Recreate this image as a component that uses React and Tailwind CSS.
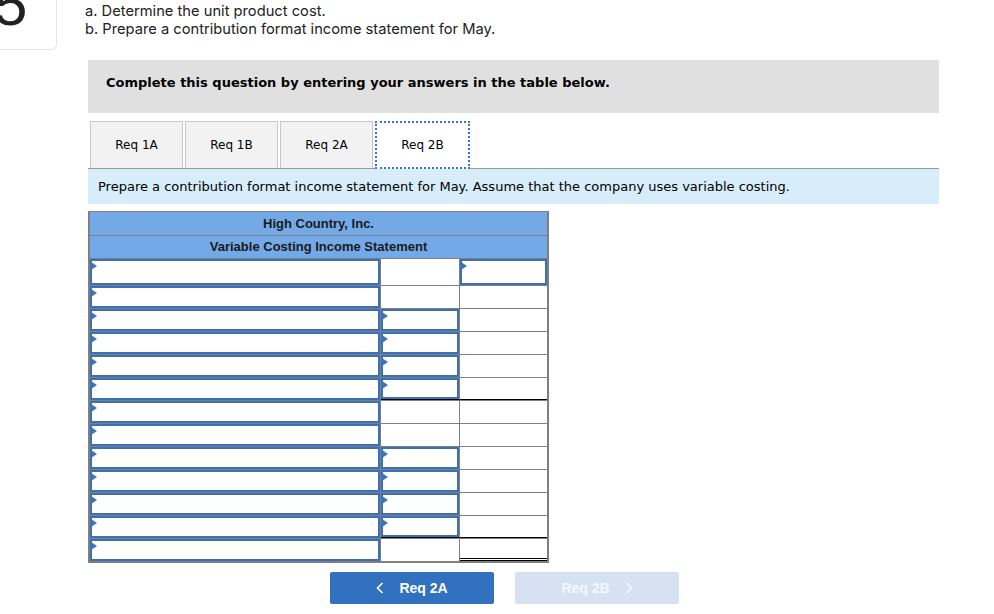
import React from "react";

const rows = [
  { c2: false, c3: true, h: "h-[27px]" },
  { c2: false },
  { c2: true },
  { c2: true },
  { c2: true },
  { c2: true, line: true },
  { c2: false },
  { c2: false },
  { c2: true },
  { c2: true },
  { c2: true },
  { c2: true, line: true },
  { c2: false, dbl: true },
];

function Field() {
  return (
    <div className="relative h-full border-2 border-[#3a70b7] bg-white">
      <span className="absolute left-[-1px] top-[1px] border-y-[4px] border-y-transparent border-l-[6px] border-l-[#3a74c0]" />
    </div>
  );
}

function Row({ row }) {
  return (
    <div className={`flex border-t border-[#808080] ${row.h || "h-[23px]"}`}>
      <div className="w-[291px] border-r border-[#808080]">
        <Field />
      </div>
      <div className={`w-[79px] border-r border-[#808080] ${row.line ? "border-b border-b-black" : ""}`}>
        {row.c2 && <Field />}
      </div>
      <div className={`flex-1 ${row.line ? "border-b border-b-black" : ""} ${row.dbl ? "border-b-[3px] border-double border-b-black" : ""}`}>
        {row.c3 && <Field />}
      </div>
    </div>
  );
}

export default function App() {
  const tabs = ["Req 1A", "Req 1B", "Req 2A"];
  return (
    <div className="w-[994px] h-[614px] overflow-hidden bg-white">
      <div className="flex">
        <div className="w-[57px] h-[50px] overflow-hidden border-r border-b border-[#e6e6e6] rounded-br-[6px] shrink-0">
          <div className="mt-[-25px] ml-[-6px] text-[60px] leading-none font-['Liberation_Sans',sans-serif] text-[#222]">5</div>
        </div>
        <div className="ml-[28px] pt-[2px] text-[14.7px] leading-[18px] text-[#222] font-['Inter',sans-serif]">
          <p>a. Determine the unit product cost.</p>
          <p>b. Prepare a contribution format income statement for May.</p>
        </div>
      </div>

      <div className="ml-[88px] w-[851px] mt-[10px]">
        <div className="h-[53px] bg-[#e0e0e0] pt-[13px] px-[18px] font-['DejaVu_Sans',sans-serif] text-[13px] font-bold text-black">
          Complete this question by entering your answers in the table below.
        </div>

        <div className="mt-[8px] flex items-end border-b border-[#9a9a9a] pl-[2px] gap-[2px] font-['DejaVu_Sans',sans-serif] text-[12px] text-black">
          {tabs.map(t => (
            <div key={t} className="w-[93px] h-[47px] flex items-center justify-center bg-[#f2f2f2] border border-b-0 border-[#c8c8c8]">
              {t}
            </div>
          ))}
          <div className="w-[95px] h-[48px] mb-[-1px] flex items-center justify-center bg-white border-2 border-dotted border-[#3a76c8]">
            Req 2B
          </div>
        </div>

        <div className="h-[35px] bg-[#d7edf9] flex items-center px-[10px] font-['DejaVu_Sans',sans-serif] text-[13px] text-black">
          Prepare a contribution format income statement for May. Assume that the company uses variable costing.
        </div>

        <div className="mt-[7px] w-[461px] border-2 border-t border-[#7f7f7f] font-['Liberation_Sans',sans-serif] text-[13px] font-bold text-[#1a1a1a]">
          <div className="h-[23px] bg-[#74a9e8] flex items-center justify-center">High Country, Inc.</div>
          <div className="h-[23px] bg-[#74a9e8] border-t border-[#808080] flex items-center justify-center">Variable Costing Income Statement</div>
          {rows.map((r, i) => (
            <Row key={i} row={r} />
          ))}
        </div>

        <div className="mt-[9px] pl-[242px] flex gap-[21px] font-['Liberation_Sans',sans-serif] text-[14px] font-bold">
          <button className="w-[164px] h-[32px] rounded-[2px] bg-[#3171bf] text-white flex items-center justify-center gap-[15px]">
            <svg width="8" height="12" viewBox="0 0 8 12" fill="none" stroke="currentColor" strokeWidth="1.6"><polyline points="6.5,1 1.5,6 6.5,11" /></svg>
            <span>Req 2A</span>
          </button>
          <button className="w-[164px] h-[32px] rounded-[2px] bg-[#d6e2f2] text-[#f4f8fd] flex items-center justify-center gap-[15px]">
            <span>Req 2B</span>
            <svg width="8" height="12" viewBox="0 0 8 12" fill="none" stroke="currentColor" strokeWidth="1.6"><polyline points="1.5,1 6.5,6 1.5,11" /></svg>
          </button>
        </div>
      </div>
    </div>
  );
}
